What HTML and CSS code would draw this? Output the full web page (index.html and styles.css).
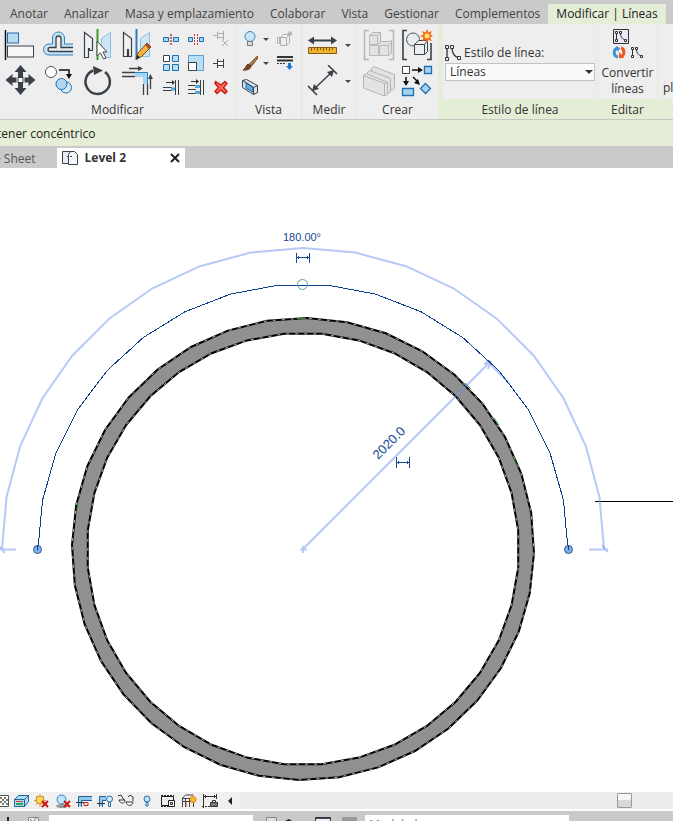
FILE: index.html
```html
<!DOCTYPE html>
<html lang="es">
<head>
  <meta charset="UTF-8" />
  <meta name="viewport" content="width=device-width, initial-scale=1" />
  <title>Level 2</title>
  <link rel="stylesheet" href="styles.css">
</head>
<body>

  <nav class="ribbon-tabs">
    <a href="#">Anotar</a>
    <a href="#">Analizar</a>
    <a href="#">Masa y emplazamiento</a>
    <a href="#">Colaborar</a>
    <a href="#">Vista</a>
    <a href="#">Gestionar</a>
    <a href="#">Complementos</a>
    <a href="#" class="active">Modificar | Líneas</a>
  </nav>

  <div class="ribbon">
    <!-- Modificar -->
    <section class="panel modify">
      <div class="tools">
        <div class="large-grid four">
          <button aria-label="Alinear"><svg width="32" height="32"><path d="M1.500 1v30" stroke="#111" stroke-width="1.500"/><rect x="3.500" y="4" width="11" height="10" fill="#b9dcf2" stroke="#1f6fae"/><rect x="3.500" y="17" width="26" height="11" fill="#f7f8fa" stroke="#3b4149"/></svg></button>
          <button aria-label="Desfase"><svg width="32" height="32" fill="none"><path d="M30 24.500H6a4 4 0 0 1 0-8h5V9.500a4.500 4.500 0 0 1 9 0v7h10" stroke="#c3e3f6" stroke-width="3"/><path d="M30 26H6a5 5 0 0 1 0-11h3.500V9a6 6 0 0 1 12 0v6H30" stroke="#3a80b8"/><path d="M30 22.500H7a2 2 0 0 1 0-4h6V9.500a2.500 2.500 0 0 1 5 0v9h12" stroke="#3b4149" stroke-width="1.300"/></svg></button>
          <button aria-label="Reflejar - Seleccionar eje"><svg width="32" height="32"><path d="M2.500 3.500l8 6v12H7.500v-2H6.500v9h-4z" fill="#f1f2f4" stroke="#3b4149" stroke-width="1.200"/><path d="M28.500 3.500l-9 6v17h3v2h6z" fill="#cde6f6" stroke="#8fbfe0"/><path d="M15.500 0v31" stroke="#3f9a35" stroke-width="2"/><path d="M15 12v15l3.500-3 3 6 2.500-1-3-6h4z" fill="#fff" stroke="#444"/></svg></button>
          <button aria-label="Reflejar - Dibujar eje"><svg width="32" height="32"><path d="M2.500 3.500l8 6v18H7.500v-7H6.500v7h-4z" fill="#f1f2f4" stroke="#3b4149" stroke-width="1.200"/><path d="M28.500 3.500l-9 6v18h9z" fill="#cde6f6" stroke="#8fbfe0"/><path d="M15.500 0v31" stroke="#2f7cc0" stroke-width="2"/><path d="M15 30l2-6L26 14l4 4-10 10z" fill="#f4b63f" stroke="#7a4b12"/><path d="M24 16l2-2 4 4-2 2z" fill="#b0452a"/><path d="M15 30l1.500-4 2.500 2.500z" fill="#222"/></svg></button>
          <button aria-label="Mover"><svg width="32" height="32"><g fill="#3b4149"><path d="M16.500 0l6 7h-3.500v5h-5V7h-3.500zM16.500 30l6-7h-3.500v-5h-5v5h-3.500zM1.500 15l7-6v3.500h4v5h-4V21zM31.500 15l-7-6v3.500h-4v5h4V21z"/></g><rect x="14" y="12.500" width="5" height="5" fill="#fff" stroke="#3b4149"/></svg></button>
          <button aria-label="Copiar"><svg width="32" height="32"><circle cx="8" cy="7" r="5.500" fill="#fff" stroke="#555"/><path d="M16 5h10v5" fill="none" stroke="#111" stroke-width="1.500"/><path d="M23 9h6l-3 5z" fill="#111"/><circle cx="23" cy="22.500" r="5.500" fill="#d4ecfa" stroke="#1f6fae"/><circle cx="18.500" cy="19" r="5.500" fill="#b2d8f1" stroke="#1f6fae"/></svg></button>
          <button aria-label="Rotar"><svg width="32" height="32"><path d="M23 7a12.200 12.200 0 1 1-12-1.500" fill="none" stroke="#3b4149" stroke-width="2.500"/><path d="M11 1l10 4.500L12 10z" fill="#3b4149"/></svg></button>
          <button aria-label="Recortar/Extender a esquina"><svg width="32" height="32" fill="none"><path d="M1 7.500h13M1 11.500h13M22.500 19v11M26.500 19v11" stroke="#3b4149" stroke-width="1.300"/><path d="M14 9.500h10.500V19" stroke="#a6d5f3" stroke-width="5"/><path d="M14 7.500h12.500V19" stroke="#2685c9"/><path d="M8 3.500h10M29.500 24V13" stroke="#3b4149" stroke-width="1.300"/><path d="M17 1l5 2.500L17 6zM27 14l2.500-5 2.500 5z" fill="#3b4149"/></svg></button>
        </div>
        <div class="small-grid three">
          <button aria-label="Dividir elemento"><svg width="16" height="16"><path d="M.500 6.500h5v4h-5zM10.500 6.500h5v4h-5z" fill="#a8d6f2" stroke="#1f6fae"/><path d="M8 3v11" stroke="#c33" stroke-width="1.500" stroke-dasharray="2 1"/></svg></button>
          <button aria-label="Dividir con separación"><svg width="16" height="16"><path d="M.500 6.500h4v4h-4zM11.500 6.500h4v4h-4z" fill="#a8d6f2" stroke="#1f6fae"/><path d="M6.500 3v11M9.500 3v11" stroke="#c33" stroke-dasharray="2 1"/></svg></button>
          <button aria-label="Desbloquear"><svg width="16" height="16" fill="none" stroke="#aaa"><path d="M0 4.500h4M4.500 1v7M4.500 2.500h6M4.500 6.500h6M10.500 0v9M9 9l6 6M15 9l-6 6"/></svg></button>
          <button aria-label="Matriz"><svg width="16" height="16"><path d="M.500.500h6v6h-6z" fill="#fff" stroke="#3b4149"/><path d="M9.500.500h6v6h-6zM.500 9.500h6v6h-6zM9.500 9.500h6v6h-6z" fill="#b9dff5" stroke="#1f6fae"/></svg></button>
          <button aria-label="Escalar"><svg width="16" height="16"><path d="M.500.500h15v15H.500z" fill="#b9dff5" stroke="#5b9fce"/><path d="M.500 7.500h8v8h-8z" fill="#fff" stroke="#3b4149"/></svg></button>
          <button aria-label="Bloquear"><svg width="16" height="16" fill="#fff" stroke="#3b4149"><path d="M0 8.500h4M4.500 4v9M4.500 6.500h6v4h-6zM10.500 4v9"/></svg></button>
          <button aria-label="Recortar un elemento"><svg width="16" height="16" fill="none"><path d="M3 3.500h7" stroke="#333"/><path d="M9 1l3 2.500L9 6z" fill="#333"/><path d="M0 8.500h9M0 11.500h9" stroke="#3b4149"/><path d="M8 10h5" stroke="#55a7dc" stroke-width="3"/><path d="M12.500 1v15M15.500 1v15" stroke="#3b4149"/></svg></button>
          <button aria-label="Recortar varios elementos"><svg width="16" height="16" fill="none"><path d="M3 2.500h6" stroke="#333"/><path d="M8 0l3 2.500L8 5z" fill="#333"/><path d="M0 6.500h8M0 10.500h8M0 14.500h8" stroke="#3b4149"/><path d="M7 7.500h5M7 13.500h5" stroke="#55a7dc" stroke-width="3"/><path d="M12.500 1v15M15.500 1v15" stroke="#3b4149"/></svg></button>
          <button aria-label="Suprimir"><svg width="16" height="16"><path d="M2.500 2.500L8 6l4-3.500 2 2L10.500 8.500l3.500 4-2 2L8 11l-4 3.500-2-2L5.500 8.500 2 4.500z" fill="#ff6a5c" stroke="#c41d16" stroke-width="1.400"/></svg></button>
        </div>
      </div>
      <h2>Modificar</h2>
    </section>

    <!-- Vista -->
    <section class="panel view">
      <div class="tools">
        <div class="view-grid">
          <button aria-label="Ocultar en vista"><svg width="16" height="16"><circle cx="8" cy="5.500" r="5" fill="#c7e6fa" stroke="#3c86c0"/><path d="M5.500 10.500h5v4h-5z" fill="#ddd" stroke="#777"/></svg></button>
          <span class="drop"></span>
          <button aria-label="Cuadro de selección"><svg width="16" height="16" fill="none" stroke="#b0b0b0"><path d="M3.500 6.500h6v8h-6zM3.500 6.500l3-3h6v8l-3 3M9.500 6.500l3-3M.500 6.500h2v6h-2zM13 0v5M10.500 2.500h5M11 .500l4 4M15 .500l-4 4"/></svg></button>
          <button aria-label="Modificar gráficos"><svg width="16" height="16"><path d="M15.500 1l1 1-7 9-2-2z" fill="#c98345" stroke="#5c3418"/><path d="M9 11c0 3-4 4.500-8 4 3-1 2-4 5-6z" fill="#7b4322" stroke="#5c3418"/></svg></button>
          <span class="drop"></span>
          <button aria-label="Líneas"><svg width="16" height="16"><path d="M0 2h16M0 5.500h16" stroke="#333" stroke-width="2"/><path d="M0 8.500h9" stroke="#333" stroke-dasharray="2 1"/><path d="M11 8h3v3h2l-3.500 4L9 11h2z" fill="#1878d2"/></svg></button>
          <button aria-label="Caja de sección"><svg width="16" height="16"><path d="M.500 1.500l4-1 11 6v7l-4 2-11-7z" fill="#d6e3ef" stroke="#3b4149"/><path d="M4 4l7 4v5L4 9z" fill="#62b0e5" stroke="#1f6fae"/><path d="M.500 1.500l11 7 4-2M11.500 8.500v7" fill="none" stroke="#3b4149"/></svg></button>
        </div>
      </div>
      <h2>Vista</h2>
    </section>

    <!-- Medir -->
    <section class="panel measure">
      <div class="tools">
        <div class="measure-grid">
          <button aria-label="Medir entre dos referencias"><svg width="32" height="32"><path d="M4 11.500h24" stroke="#3b4149" stroke-width="2"/><path d="M2 11.500l6-4v8zM31 11.500l-6-4v8z" fill="#3b4149"/><path d="M2.500 18.500h28v6h-28z" fill="#f0b62f" stroke="#8a5a13"/><path d="M5.500 19v3M8.500 19v2M11.500 19v3M14.500 19v2M17.500 19v3M20.500 19v2M23.500 19v3M26.500 19v2" stroke="#8a5a13"/></svg></button>
          <span class="drop"></span>
          <button aria-label="Cota alineada"><svg width="32" height="32"><path d="M7 25L27 6M2 21l9 9M22 0l9 9" stroke="#3b4149" stroke-width="1.500"/><path d="M6 26l2-7 5 5zM28 5l-7 2 5 5z" fill="#3b4149"/></svg></button>
          <span class="drop"></span>
        </div>
      </div>
      <h2>Medir</h2>
    </section>

    <!-- Crear -->
    <section class="panel create">
      <div class="tools">
        <div class="large-grid two">
          <button aria-label="Crear conjunto"><svg width="32" height="32" fill="#e2e2e2" stroke="#b5b5b5"><path d="M6 1.500H1.500v29H6M26 1.500h4.500v29H26" fill="none" stroke-width="1.500"/><path d="M6.500 6.500l3-3h8v9h9l2-1v13l-3 2h-19z"/><path d="M6.500 6.500h8v9h-8zM6.500 16.500h9v10h-9zM16.500 16.500h9v10h-9zM25.500 16.500l3-3M14.500 6.500l3-3M14.500 15.500l4-3" stroke="#bbb"/></svg></button>
          <button aria-label="Crear grupo"><svg width="32" height="32"><path d="M6 1.500H2v29h4M26 30.500h4V14" fill="none" stroke="#3b4149" stroke-width="1.600"/><circle cx="12" cy="10.500" r="6.500" fill="#e9ecef" stroke="#555"/><path d="M13.500 15.500l4-4h9v11l-3 3h-10z" fill="#edf0f2" stroke="#3b4149"/><path d="M13.500 15.500h10v10M23.500 15.500l3-4" fill="none" stroke="#3b4149"/><path d="M26 0l1.500 3.500L31 2l-1.500 3.500L32 7l-3 1.500L31 12l-3.500-1L26 14l-1.500-3L21 12l1.500-3.500L19 7l3.500-1.500L21 2l3.500 1.500z" fill="#f26a1b"/><circle cx="26" cy="7" r="2.500" fill="#ffe26b"/></svg></button>
          <button aria-label="Crear piezas"><svg width="32" height="32" fill="#e3e3e3" stroke="#b3b3b3"><path d="M8.500 4l2-2.500 21 8v14l-2 1.500-21-8z"/><path d="M4.500 7.500l2-2 21 8V27l-2 1-21-8z"/><path d="M.500 10.500l3-2 21 9v12l-3 1.500-21-8z"/><path d="M.500 10.500l21 8v12.500M21.500 18.500l3-1" fill="none"/></svg></button>
          <button aria-label="Crear similar"><svg width="32" height="32"><path d="M1.500 1.500h7v7h-7z" fill="#fff" stroke="#3b4149"/><path d="M23.500 1.500h7v7h-7zM1.500 23.500h11v7h-11zM24.500 18.500l5 5-5 5-5-5z" fill="#a8d3f0" stroke="#1f6fae" stroke-width="1.300"/><path d="M11 5h7M5 12v6M12 12l4 4" stroke="#111" stroke-width="1.500"/><path d="M17 2l5 3-5 3zM2 16h6l-3 5zM19 20l-6-2 4-4z" fill="#111"/></svg></button>
        </div>
      </div>
      <h2>Crear</h2>
    </section>

    <!-- Estilo de línea -->
    <section class="panel context line-style">
      <div class="tools">
        <label for="line-style"><svg width="16" height="16"><path d="M2 2v11M7 2c0 7 3 10 7 11" fill="none" stroke="#333" stroke-width="1.300"/><path d="M.500.500h3v3h-3zM.500 12.500h3v3h-3zM5.500.500h3v3h-3zM12.500 11.500h3v3h-3z" fill="#eee" stroke="#333"/></svg>Estilo de línea:</label>
        <div class="select-wrap">
          <select id="line-style"><option>Líneas</option></select>
        </div>
      </div>
      <h2>Estilo de línea</h2>
    </section>

    <!-- Editar -->
    <section class="panel context edit">
      <div class="tools">
        <button class="convert">
          <svg width="34" height="32"><path d="M3.500 1.500h15v14h-15z" fill="#e9eaf3" stroke="#333"/><path d="M6.500 4v9M10.500 4c0 6 2 7 5 8" fill="none" stroke="#333"/><path d="M5.500 3.500h2v2h-2zM5.500 11.500h2v2h-2zM9.500 3.500h2v2h-2zM14.500 11.500h2v2h-2z" fill="#fff" stroke="#333"/><path d="M8 20c-5 1-5 8 0 9" fill="none" stroke="#3d94dc" stroke-width="3"/><path d="M6 18l4 2-2 4z" fill="#3d94dc"/><path d="M10 29c5-1 5-8 1-9" fill="none" stroke="#ea5a22" stroke-width="3"/><path d="M9 24v6h5z" fill="#ea5a22"/><path d="M22.500 20v9M26.500 20c0 6 2 7 5 8" fill="none" stroke="#333"/><path d="M21.500 19.500h2v2h-2zM21.500 27.500h2v2h-2zM25.500 19.500h2v2h-2zM30.500 27.500h2v2h-2z" fill="#fff" stroke="#333"/></svg>
          <span>Convertir</span>
          <span>líneas</span>
        </button>
      </div>
      <h2>Editar</h2>
    </section>

    <section class="panel context more">
      <div class="tools"><button class="plane">pl</button></div>
      <h2>&nbsp;</h2>
    </section>
  </div>

  <div class="options-bar">tener concéntrico</div>

  <div class="view-tabs">
    <button class="view-tab">e Sheet</button>
    <div class="view-tab active">
      <svg width="16" height="16"><path d="M.500 1.500h10v12H.500z" fill="#e7ecf5" stroke="#3b4149"/><path d="M6.500 8V4.500l2-3h4l3 3v10h-9z" fill="#f4f6fb" stroke="#3b4149"/><path d="M5 6.500h6M6.500 6v8" stroke="#3b4149" stroke-dasharray="2 1"/></svg>
      <strong>Level 2</strong>
      <button class="close" aria-label="Cerrar"><svg width="10" height="10"><path d="M1 1l8 8M9 1L1 9" stroke="#222" stroke-width="2"/></svg></button>
    </div>
  </div>

  <main class="canvas">
    <svg class="drawing" width="100%" height="100%">
      <path id="wall" class="wall" />
      <path id="wall-edges" class="wall-edges" />
      <path id="wall-gap" class="wall-gap" />
      <path d="M595 333.500h400" stroke="#000" />
      <path d="M297 150.500h9M465 215l6 6M494 250l5 7M514 291l3 6M77 341l1-6" stroke="#2b9a2b" />

      <!-- angular dimension -->
      <path id="angle-dim" class="dim" />
      <path class="dim" d="M-8 381.500h24M589 381.500h19M-2 377l7 8M602 377l6 7" />

      <!-- radial dimension -->
      <path class="dim" d="M303 381L489 195M300 381.500h7M303 378v7M484 196l7-3M491 193l-3 8M486 192l24 24" />

      <!-- selected arc -->
      <path id="line-arc" class="line-arc" />
      <circle class="grip-open" cx="302.500" cy="116.500" r="5" />
      <circle class="grip" cx="37.500" cy="381.500" r="4" />
      <circle class="grip" cx="568.500" cy="381.500" r="4" />
      <path d="M37.500 377v5M568.500 377v5" stroke="#0d3f8c" />

      <path class="dim-toggle" d="M296.500 85v10M309.500 85v10M297 89.500h12M298.500 88v3M307.500 88v3" />
      <path class="dim-toggle" d="M396.500 289v11M409.500 289v11M397 294.500h12M398.500 293v3M407.500 293v3" />
      <text class="angle-text" x="302" y="73" text-anchor="middle">180.00°</text>
      <text class="radius-text" transform="translate(378 292) rotate(-45)">2020.0</text>
    </svg>
  </main>

  <div class="view-bar">
    <button aria-label="Escala"><svg width="18" height="16"><path d="M8.500 2.500h9v11h-9z" fill="#fff" stroke="#555"/><path d="M9 4h2v2H9zM13 4h2v2h-2zM11 6h2v2h-2zM15 6h2v2h-2zM9 8h2v2H9zM13 8h2v2h-2zM11 10h2v2h-2zM15 10h2v2h-2z" fill="#777"/></svg></button>
    <button aria-label="Nivel de detalle"><svg width="16" height="16"><path d="M1.500 6.500l4-4h10v6l-4 5h-10z" fill="#a9ddf8" stroke="#23639a"/><path d="M1.500 6.500h10v7M11.500 6.500l4-4" fill="none" stroke="#23639a"/><path d="M3 8.500h7" stroke="#d33"/><path d="M3 11h7" stroke="#28a55a" stroke-width="2"/></svg></button>
    <button aria-label="Camino de sol"><svg width="16" height="16"><path d="M6 1v13M0 7.500h12M2 3l8 9M10 3l-8 9" stroke="#df9724"/><circle cx="6" cy="7" r="4" fill="#ffd95d" stroke="#cf8719"/><path d="M8 8l6 6M14 8l-6 6" stroke="#c91515" stroke-width="2"/></svg></button>
    <button aria-label="Sombras"><svg width="16" height="16"><ellipse cx="7" cy="13" rx="6" ry="2" fill="#999"/><circle cx="6.500" cy="6.500" r="4.500" fill="#bfe5fb" stroke="#3b7fb8"/><path d="M9 8l6 6M15 8l-6 6" stroke="#c91515" stroke-width="2"/></svg></button>
    <button aria-label="Recortar vista"><svg width="16" height="16" fill="none"><path d="M4 13V5.500H16" stroke="#8fc9ee" stroke-width="3"/><path d="M2.500 14V3.500H16M5.500 14V7.500H16" stroke="#235f94"/><path d="M0 9.500h8" stroke="#333"/><path d="M8 9.500h4v3H8z" stroke="#c22"/></svg></button>
    <button aria-label="Mostrar región de recorte"><svg width="16" height="16" fill="none"><path d="M4 13V5.500h5" stroke="#8fc9ee" stroke-width="3"/><path d="M2.500 14V3.500H9M5.500 14V7.500H9" stroke="#235f94"/><path d="M0 10.500h8" stroke="#333"/><circle cx="12.500" cy="6" r="3" fill="#d7effc" stroke="#286caa"/><path d="M11.500 9.500h2v4h-2z" fill="#fff" stroke="#286caa"/></svg></button>
    <button aria-label="Ocultar/Aislar temporal"><svg width="16" height="16" fill="none" stroke="#333"><path d="M0 3l3-1 3 5M15 4l-3-2-2 2M15 4v4"/><path d="M1 7h6c0 4-5 4-6 0zM8 9h7c0 4-6 5-7 0z" fill="#fff"/></svg></button>
    <button aria-label="Mostrar elementos ocultos"><svg width="16" height="16"><circle cx="8" cy="6" r="3" fill="#bfe4fb" stroke="#286caa"/><path d="M7 9.500h2V13H7z" fill="#fff" stroke="#286caa"/></svg></button>
    <button aria-label="Propiedades de vista temporales"><svg width="16" height="16" fill="none" stroke="#222"><path d="M1.500 3.500h12v9h-12z"/><path d="M1 2.500h13M1 13.500h8" stroke-dasharray="2 1"/><path d="M8.500 7.500h6v6h-6z" fill="#fff"/><path d="M10.500 9.500h2v2h-2z"/></svg></button>
    <button aria-label="Modelo analítico"><svg width="16" height="16" fill="none" stroke="#444"><path d="M1.500 14V5l3-3h8M4.500 14V5M8.500 14V5M1 8.500h11M1 5.500h8M12.500 14V8"/><path d="M5 8v6" stroke="#c33"/><circle cx="12" cy="6.500" r="3" fill="#ffb52e" stroke="#dc861a"/></svg></button>
    <button aria-label="Restricciones"><svg width="16" height="16" fill="none" stroke="#333"><path d="M1.500 1v14M14.500 1v5M2 3.500h12M3.500 2v3M12.500 2v3"/><path d="M0 13.500h8" stroke-dasharray="2 1"/><path d="M8.500 9.500h7v4h-7z" fill="#777"/><path d="M10.500 9V7.500h3V9"/></svg></button>
    <button class="scroll-left" aria-label="Desplazar a la izquierda"><svg width="16" height="16"><path d="M9 4v8L5 8z" fill="#222"/></svg></button>
    <div class="scroll-track"><div class="scroll-thumb"></div></div>
  </div>

  <footer class="status-bar">
    <svg width="49" height="20"><path d="M8 6v8" stroke="#222" stroke-width="2"/><path d="M28.500 6.500h10v8h-10z" fill="#eee" stroke="#888"/><path d="M30 8l3 3 4-5" fill="none" stroke="#777"/></svg>
    <select class="workset" aria-label="Subproyecto"><option></option></select>
    <svg class="status-icons" width="112" height="20"><path d="M13.500 6.500h10v12h-10z" fill="#ddd" stroke="#888"/><path d="M32 10l4-2 3 2z" fill="#222"/><path d="M62.500 6.500h15v12h-15z" fill="#eef2fa" stroke="#333"/><path d="M63 7.500h14" stroke="#3b4860"/><path d="M89 6h15v12H89z" fill="#999"/></svg>
    <select class="design-option" aria-label="Opción de diseño"><option>Modelo base</option></select>
  </footer>

  <script src="script.js"></script>
</body>
</html>
```
FILE: styles.css
```css
* {
  box-sizing: border-box;
}
body {
  margin: 0;
  height: 100vh;
  display: flex;
  flex-direction: column;
  overflow: hidden;
  font-family: "Open Sans", "Noto Sans", sans-serif;
  font-size: 12px;
  line-height: 16px;
  color: #333;
  background: #fff;
}
button {
  padding: 0;
  border: none;
  background: none;
  font: inherit;
  color: inherit;
}
svg {
  display: block;
  flex-shrink: 0;
}

/* RIBBON TABS */
.ribbon-tabs {
  display: flex;
  flex-shrink: 0;
  height: 24px;
  padding: 4px 0 0 2px;
  background: #cacaca;
  overflow: hidden;
}
.ribbon-tabs a {
  flex-shrink: 0;
  padding: 2px 8px;
  color: #444;
  text-decoration: none;
  white-space: nowrap;
}
.ribbon-tabs .active {
  background: #e4edd6;
  color: #222;
}

/* RIBBON PANELS */
.ribbon {
  display: flex;
  flex-shrink: 0;
  height: 96px;
  background: #eee;
  border-bottom: 1px solid #c6c9c1;
  overflow: hidden;
}
.panel {
  display: flex;
  flex-direction: column;
  flex-shrink: 0;
  border-right: 1px solid #e3e8dc;
}
.panel h2 {
  margin: 0;
  height: 20px;
  line-height: 22px;
  font-size: 12px;
  font-weight: normal;
  text-align: center;
}
.tools {
  display: flex;
  flex: 1;
  padding-top: 3px;
}
.tools button {
  display: flex;
  align-items: center;
  justify-content: center;
}
.modify {
  width: 236px;
}
.view {
  width: 66px;
}
.measure {
  width: 55px;
}
.create {
  width: 81px;
  border-right: none;
}
.large-grid {
  display: grid;
  grid-auto-rows: 36px;
  column-gap: 1px;
}
.four {
  grid-template-columns: repeat(4, 38px);
  padding-left: 1px;
}
.two {
  grid-template-columns: repeat(2, 37px);
  padding-left: 3px;
}
.small-grid {
  display: grid;
  grid-template-columns: repeat(3, 25px);
  grid-auto-rows: 24px;
  margin-left: 2px;
}
.view-grid {
  display: grid;
  grid-template-columns: 28px 4px 34px;
  grid-auto-rows: 24px;
}
.measure-grid {
  display: grid;
  grid-template-columns: 40px 12px;
  grid-auto-rows: 36px;
}
.drop {
  place-self: center;
  border: 3px solid transparent;
  border-top-color: #444;
  border-bottom: none;
}

/* CONTEXT PANELS */
.context {
  border-color: #e4edd6;
}
.context h2 {
  background: #e4edd6;
}
.line-style {
  width: 160px;
  border-left: 5px solid #e4edd6;
}
.line-style .tools {
  flex-direction: column;
  padding: 20px 2px 0;
}
.line-style label {
  display: flex;
  align-items: center;
  gap: 3px;
  height: 18px;
}
.select-wrap {
  position: relative;
  margin-top: 1px;
}
.select-wrap::after {
  content: "";
  position: absolute;
  top: 7px;
  right: 2px;
  border: 4px solid transparent;
  border-top-color: #333;
  border-bottom: none;
  pointer-events: none;
}
.select-wrap select {
  display: block;
  width: 100%;
  height: 18px;
  padding: 0 4px;
  appearance: none;
  border: 1px solid #bfc3c8;
  border-radius: 0;
  background: #fafafa;
  font: inherit;
  line-height: 16px;
  color: #333;
}
.edit {
  width: 60px;
}
.edit .tools {
  justify-content: center;
}
.tools .convert {
  flex-direction: column;
  justify-content: flex-start;
}
.convert svg {
  margin-top: 1px;
  margin-bottom: 5px;
}
.more {
  flex: 1;
}
.plane {
  align-self: flex-end;
  padding: 0 0 3px 5px;
}

/* OPTIONS BAR */
.options-bar {
  flex-shrink: 0;
  height: 26px;
  line-height: 28px;
  text-indent: -3px;
  background: #e5eed7;
  color: #222;
}

/* VIEW TABS */
.view-tabs {
  display: flex;
  flex-shrink: 0;
  height: 22px;
  padding-top: 2px;
  background: #cacaca;
}
.view-tab {
  height: 20px;
  line-height: 22px;
  margin-left: -6px;
  color: #555;
}
.view-tab.active {
  display: flex;
  align-items: center;
  width: 128px;
  margin-left: 21px;
  padding: 0 5px;
  gap: 7px;
  background: #fff;
  color: #333;
}
.close {
  margin-left: auto;
}

/* DRAWING AREA */
.canvas {
  flex: 1;
  min-height: 0;
  overflow: hidden;
}
.drawing {
  fill: none;
}
.wall {
  fill: #909090;
  fill-rule: evenodd;
}
.wall-edges {
  stroke: #000;
  stroke-width: 2;
}
.wall-gap {
  stroke: #fff;
  stroke-width: 1;
  stroke-dasharray: 3 6;
  stroke-opacity: .7;
}
.dim {
  stroke: #6f93ee;
  stroke-width: 2;
  stroke-opacity: .5;
}
.line-arc {
  stroke: #0d3f8c;
  shape-rendering: crispEdges;
}
.grip {
  fill: #7fb1f2;
  stroke: #39577f;
}
.grip-open {
  stroke: #5d9bb5;
}
.dim-toggle {
  stroke: #174a96;
}
.angle-text,
.radius-text {
  font-family: "Liberation Sans", Arial, sans-serif;
  fill: #174a96;
}
.angle-text {
  font-size: 11px;
}
.radius-text {
  font-size: 13px;
}

/* VIEW CONTROL BAR */
.view-bar {
  display: flex;
  flex-shrink: 0;
  height: 17px;
  margin-left: -11px;
  margin-bottom: 2px;
  background: #f0f0f0;
}
.view-bar button {
  display: flex;
  justify-content: center;
  align-items: center;
  flex: 0 0 21px;
}
.scroll-track {
  flex: 1;
  display: flex;
  justify-content: flex-end;
  padding: 1px 41px 1px 0;
  background: #ececec;
}
.scroll-thumb {
  width: 15px;
  border: 1px solid #999;
  border-radius: 1px;
  background: linear-gradient(#f5f5f5 50%, #d8d8d8 50%);
}

/* STATUS BAR */
.status-bar {
  display: flex;
  flex-shrink: 0;
  height: 10px;
  background: #cacaca;
  overflow: hidden;
}
.status-bar select {
  width: 204px;
  height: 20px;
  margin-top: 4px;
  padding: 0 4px;
  appearance: none;
  border: none;
  border-radius: 0;
  background: #fff;
  font: inherit;
  line-height: 16px;
  color: #777;
}
```
FILE: script.js
```js
const cx = 303;
const cy = 381;

// Arcs are drawn as short straight segments
function facets(radius, start, sweep, count) {
  const points = [];
  for (let i = 0; i <= count; i++) {
    const a = (start + sweep * i / count) * Math.PI / 180;
    points.push((cx + radius * Math.cos(a)).toFixed(1) + ' ' + (cy + radius * Math.sin(a)).toFixed(1));
  }
  return 'M' + points.join('L');
}

const wall = facets(231, 1, 360, 36) + 'Z' + facets(216, 5, 360, 36) + 'Z';
['wall', 'wall-edges', 'wall-gap'].forEach(id => {
  document.getElementById(id).setAttribute('d', wall);
});

document.getElementById('angle-dim').setAttribute('d', facets(301, 180, 180, 18));
document.getElementById('line-arc').setAttribute('d', facets(265, 180, 180, 17));
```
